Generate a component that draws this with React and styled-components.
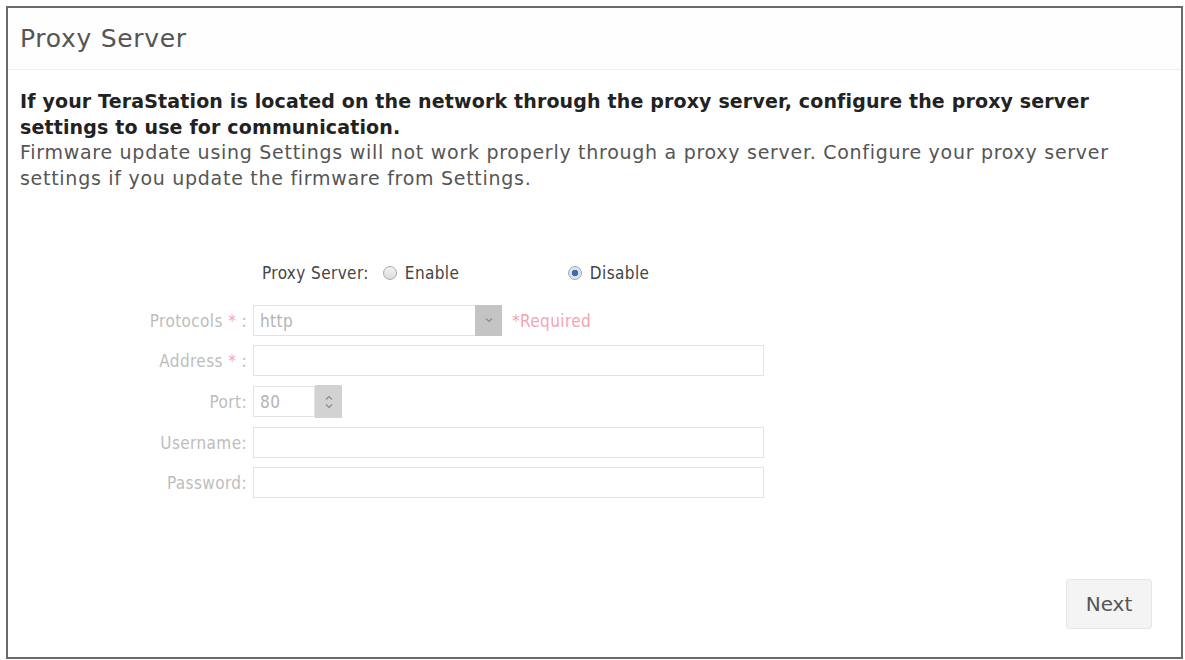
import React from "react";
import styled, { createGlobalStyle } from "styled-components";

const Global = createGlobalStyle`
  html, body {
    margin: 0;
    padding: 0;
    background: #ffffff;
  }
  body {
    font-family: "DejaVu Sans", Verdana, sans-serif;
  }
`;

const Frame = styled.div`
  box-sizing: border-box;
  width: 1177px;
  height: 653px;
  margin: 6px 0 0 6px;
  border: 2px solid #6a6a6a;
  display: flex;
  flex-direction: column;
  background: #fff;
`;

const Header = styled.div`
  height: 62px;
  box-sizing: border-box;
  padding: 0 12px;
  display: flex;
  align-items: center;
  border-bottom: 1px solid #efefef;
  background: #fefefe;
`;

const Title = styled.h1`
  margin: 0;
  font-size: 25px;
  font-weight: normal;
  color: #555;
  font-family: "DejaVu Sans", Verdana, sans-serif;
  letter-spacing: 0.7px;
`;

const Body = styled.div`
  flex: 1;
  display: flex;
  flex-direction: column;
  padding: 18px 12px 28px 12px;
`;

const Lead = styled.p`
  margin: 0;
  font-size: 19px;
  font-weight: bold;
  line-height: 26px;
  color: #222;
  letter-spacing: 0.15px;
`;

const Note = styled.p`
  margin: -1px 0 0;
  font-size: 19px;
  line-height: 26px;
  color: #555;
  letter-spacing: 0.72px;
`;

const Form = styled.div`
  margin-top: 67px;
  display: grid;
  grid-template-columns: 227px auto;
  column-gap: 6px;
  row-gap: 9px;
  align-items: center;
  font-family: "DejaVu Sans Condensed", "DejaVu Sans", sans-serif;
  font-size: 17px;
  letter-spacing: 0.4px;
`;

const SwitchRow = styled.div`
  grid-column: 1 / 3;
  display: flex;
  align-items: center;
  padding-left: 242px;
  height: 30px;
  margin-bottom: 8px;
`;

const SwitchLabel = styled.span`
  color: #444;
  margin-right: 14px;
`;

const Option = styled.label`
  display: flex;
  align-items: center;
  gap: 8px;
  width: ${(p) => p.$width}px;
  color: #444;
`;

const Radio = styled.span`
  box-sizing: border-box;
  flex: none;
  width: 14px;
  height: 14px;
  border-radius: 50%;
  border: 1px solid #a9a9a9;
  background: ${(p) =>
    p.$checked
      ? "radial-gradient(circle, #3d6ea8 0 3px, #d7e3ef 3.5px 100%)"
      : "linear-gradient(#f2f2f2, #dcdcdc)"};
`;

const Label = styled.span`
  justify-self: end;
  color: #bdbdbd;
  white-space: nowrap;
`;

const Star = styled.span`
  color: #f2a7b5;
`;

const Field = styled.div`
  display: flex;
  align-items: center;
  gap: ${(p) => p.$gap}px;
`;

const Input = styled.div`
  box-sizing: border-box;
  width: ${(p) => p.$width}px;
  height: 31px;
  border: 1px solid #e3e3e3;
  background: #fff;
  display: flex;
  align-items: center;
  color: #b3b3b3;
  padding-left: 6px;
`;

const Select = styled(Input)`
  justify-content: space-between;
`;

const SelectButton = styled.span`
  width: 27px;
  height: 31px;
  margin-right: -1px;
  background: #c4c4c4;
  display: flex;
  align-items: center;
  justify-content: center;
`;

const Spinner = styled.span`
  width: 27px;
  height: 33px;
  background: #d2d2d2;
  display: flex;
  flex-direction: column;
  align-items: center;
  justify-content: center;
  gap: 4px;
`;

const Required = styled.span`
  color: #f4a3b3;
`;

const Footer = styled.div`
  margin-top: auto;
  display: flex;
  justify-content: flex-end;
  padding-right: 17px;
`;

const NextButton = styled.button`
  width: 86px;
  height: 50px;
  border: 1px solid #e6e6e6;
  border-radius: 3px;
  background: #f4f4f4;
  color: #555;
  font-family: "DejaVu Sans", Verdana, sans-serif;
  font-size: 20px;
`;

const Chevron = ({ up }) => (
  <svg width="8" height="5" viewBox="0 0 8 5">
    <path
      d={up ? "M1 4.5 L4 1.5 L7 4.5" : "M1 0.5 L4 3.5 L7 0.5"}
      stroke="#8a8a8a"
      strokeWidth="1.1"
      fill="none"
    />
  </svg>
);

export default function App() {
  return (
    <>
      <Global />
      <Frame>
        <Header>
          <Title>Proxy Server</Title>
        </Header>
        <Body>
          <Lead>
            If your TeraStation is located on the network through the proxy
            server, configure the proxy server settings to use for
            communication.
          </Lead>
          <Note>
            Firmware update using Settings will not work properly through a
            proxy server. Configure your proxy server settings if you update the
            firmware from Settings.
          </Note>

          <Form>
            <SwitchRow>
              <SwitchLabel>Proxy Server:</SwitchLabel>
              <Option $width={185}>
                <Radio />
                Enable
              </Option>
              <Option $width={100}>
                <Radio $checked />
                Disable
              </Option>
            </SwitchRow>

            <Label>
              Protocols <Star>*</Star> :
            </Label>
            <Field $gap={10}>
              <Select $width={249}>
                http
                <SelectButton>
                  <Chevron />
                </SelectButton>
              </Select>
              <Required>*Required</Required>
            </Field>

            <Label>
              Address <Star>*</Star> :
            </Label>
            <Input $width={511} />

            <Label>Port:</Label>
            <Field $gap={0}>
              <Input $width={62}>80</Input>
              <Spinner>
                <Chevron up />
                <Chevron />
              </Spinner>
            </Field>

            <Label>Username:</Label>
            <Input $width={511} />

            <Label>Password:</Label>
            <Input $width={511} />
          </Form>

          <Footer>
            <NextButton>Next</NextButton>
          </Footer>
        </Body>
      </Frame>
    </>
  );
}
